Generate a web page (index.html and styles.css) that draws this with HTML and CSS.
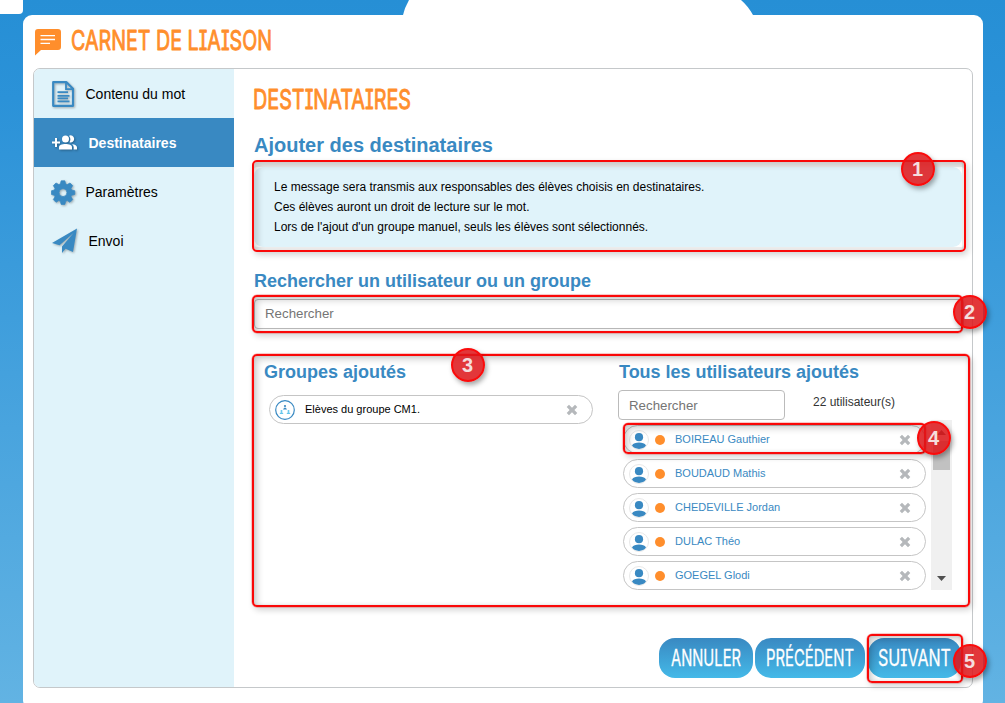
FILE: index.html
```html
<!DOCTYPE html>
<html lang="fr">
<head>
<meta charset="utf-8">
<title>Carnet de liaison</title>
<link rel="stylesheet" href="styles.css">
</head>
<body>
<svg class="defs" aria-hidden="true">
  <symbol id="cross" viewBox="0 0 12 12"><path d="M3 0.8 6 3.7 9 0.8 11.3 3 8.4 6 11.3 9 9 11.2 6 8.3 3 11.2 0.7 9 3.6 6 0.7 3z"/></symbol>
  <symbol id="user" viewBox="0 0 20 20"><circle cx="10" cy="10" r="9.5" fill="#fff" stroke="#e8e8e8"/><circle cx="10" cy="7.2" r="4.1"/><path d="M3 15.600C4 13.400 7 12.600 10 12.600s6 .8 7 3C15.500 18 13 18.900 10 18.900S4.500 18 3 15.600z"/></symbol>
</svg>
<svg class="backdrop" viewBox="0 0 1005 15" aria-hidden="true">
  <path d="M0 0H23V10Q23 14 19 14H0z"/><path d="M409 0Q404.500 8 403 15H753Q748 6 741 0z"/>
</svg>
<div class="panel">
  <header class="head">
    <svg class="head-icon" viewBox="0 0 26 27"><path fill="#ff8e2c" d="M3 0H23Q26 0 26 3V18Q26 21 23 21H6L0 26.500V3Q0 0 3 0z"/><path stroke="#fff" stroke-width="1.300" d="M5.500 6.700H20M5.500 10.500H20M5.500 14.300H15"/></svg>
    <svg class="script" width="202" height="26"><text x="-1" y="21.500" textLength="201" lengthAdjust="spacingAndGlyphs">CARNET DE LIAISON</text></svg>
  </header>
  <div class="box">
    <nav class="side">
      <a class="item"><svg class="ico" viewBox="0 0 26 28"><path fill="none" stroke="#3989c2" stroke-width="2.200" stroke-linejoin="round" d="M3.200 2.200H16.500L23 8.700V25.800H3.200z"/><path fill="none" stroke="#3989c2" stroke-width="1.800" d="M16 2.500V9.200H22.800M7.500 12.200H18M7.500 15.800H19.500M7.500 18.300H18M7.500 21.300H19.500"/></svg><span>Contenu du mot</span></a>
      <a class="item active"><svg class="ico wide" viewBox="0 0 26 28"><g fill="#fff"><path d="M4 9h2v3.500h3v2H6V18H4v-3.500H1v-2h3z"/><circle cx="14.500" cy="10" r="3.500"/><path d="M8 20.500V18.500C8 15.800 11 15 14.500 15S21 15.800 21 18.500V20.500z"/><path d="M18 6.800a3.500 3.500 0 1 1 .5 6.400Q20.500 10 18 6.800zM21 15.200C24 15.500 26 16.500 26 18.500V20.500H22.700V18Q22.600 16.200 21 15.200z"/></g></svg><span>Destinataires</span></a>
      <a class="item"><svg class="ico" viewBox="0 0 26 28"><path fill="#3989c2" stroke="#3989c2" stroke-linejoin="round" stroke-width=".8" fill-rule="evenodd" transform="translate(1.500 1) scale(.92)" d="M10.500 2h4l.9 3.400 1.700.7 3-1.800 2.900 2.900-1.800 3 .7 1.700 3.400.9v4l-3.400.9-.7 1.700 1.800 3-2.900 2.900-3-1.800-1.700.7-.9 3.400h-4l-.9-3.400-1.700-.7-3 1.800L2 22.400l1.800-3-.7-1.700L0 16.800v-4l3.100-.9.7-1.700L2 7.200l2.900-2.900 3 1.800 1.700-.7zM12.500 10.500a4.300 4.300 0 1 0 0 8.600 4.300 4.300 0 0 0 0-8.600z"/></svg><span>Paramètres</span></a>
      <a class="item"><svg class="ico wide" viewBox="0 0 26 28"><path fill="#3989c2" d="M26 1.500 22 25 14.500 21.800 11 26V19.500L22.500 6 8.500 18.200 1 16z"/></svg><span>Envoi</span></a>
    </nav>
    <main class="main">
      <svg class="script title" width="158" height="26"><text x="-1" y="21.500" textLength="158" lengthAdjust="spacingAndGlyphs">DESTINATAIRES</text></svg>
      <h2 class="h-add">Ajouter des destinataires</h2>
      <div class="info">
        <p>Le message sera transmis aux responsables des élèves choisis en destinataires.</p>
        <p>Ces élèves auront un droit de lecture sur le mot.</p>
        <p>Lors de l'ajout d'un groupe manuel, seuls les élèves sont sélectionnés.</p>
      </div>
      <h3 class="h-search">Rechercher un utilisateur ou un groupe</h3>
      <div class="field wide-field">Rechercher</div>
      <div class="cols">
        <section class="groups">
          <h3>Groupes ajoutés</h3>
          <div class="pill group"><svg class="gicon" viewBox="0 0 20 20"><circle cx="10" cy="10" r="9.300" fill="#fff" stroke="#3989c2" stroke-width="1.200"/><g fill="#3989c2"><circle cx="10" cy="6" r="1.100"/><path d="M8 9.500q2-4 4 0z"/></g><g fill="#62c5ec"><circle cx="6.500" cy="11" r="1"/><path d="M4.500 14q2-4 4 0z"/><circle cx="13.500" cy="11" r="1"/><path d="M11.500 14q2-4 4 0z"/></g></svg><span>Elèves du groupe CM1.</span><svg class="x"><use href="#cross"/></svg></div>
        </section>
        <section class="users">
          <h3>Tous les utilisateurs ajoutés</h3>
          <div class="filter"><div class="field small">Rechercher</div><span>22 utilisateur(s)</span></div>
          <div class="scroller">
            <div class="list">
              <div class="pill"><svg class="avatar"><use href="#user"/></svg><i class="dot"></i><span>BOIREAU Gauthier</span><svg class="x"><use href="#cross"/></svg></div>
              <div class="pill"><svg class="avatar"><use href="#user"/></svg><i class="dot"></i><span>BOUDAUD Mathis</span><svg class="x"><use href="#cross"/></svg></div>
              <div class="pill"><svg class="avatar"><use href="#user"/></svg><i class="dot"></i><span>CHEDEVILLE Jordan</span><svg class="x"><use href="#cross"/></svg></div>
              <div class="pill"><svg class="avatar"><use href="#user"/></svg><i class="dot"></i><span>DULAC Théo</span><svg class="x"><use href="#cross"/></svg></div>
              <div class="pill"><svg class="avatar"><use href="#user"/></svg><i class="dot"></i><span>GOEGEL Glodi</span><svg class="x"><use href="#cross"/></svg></div>
            </div>
            <div class="bar"><svg viewBox="0 0 9 5"><path d="M0 5 4.500 0 9 5z"/></svg><div class="thumb"></div><svg class="down" viewBox="0 0 9 5"><path d="M0 0H9L4.500 5z"/></svg></div>
          </div>
        </section>
      </div>
      <div class="actions">
        <div class="btn b1"><svg class="script" width="70" height="24"><text x="0" y="20" textLength="70" lengthAdjust="spacingAndGlyphs">ANNULER</text></svg></div>
        <div class="btn b2"><svg class="script" width="89" height="24"><text x="0" y="20" textLength="88" lengthAdjust="spacingAndGlyphs">PRÉCÉDENT</text></svg></div>
        <div class="btn b3"><svg class="script" width="73" height="24"><text x="0" y="20" textLength="73" lengthAdjust="spacingAndGlyphs">SUIVANT</text></svg></div>
      </div>
    </main>
  </div>
</div>
<div class="mark m1"></div><div class="mark m2"></div><div class="mark m3"></div><div class="mark m4"></div><div class="mark m5"></div>
<div class="num n1">1</div><div class="num n2">2</div><div class="num n3">3</div><div class="num n4">4</div><div class="num n5">5</div>
</body>
</html>
```
FILE: styles.css
```css
* { box-sizing: border-box; }
body { margin: 0; width: 1005px; height: 703px; overflow: hidden; position: relative; font-family: "Liberation Sans", Arial, sans-serif; color: #000; background: linear-gradient(#268fd5, #2b92d8 14%, #62b3e3); }
h2, h3, p { margin: 0; }
svg { display: block; flex: none; }
.defs { position: absolute; width: 0; height: 0; }
.backdrop { width: 1005px; height: 15px; fill: #fff; }
.panel { margin-left: 23px; width: 960px; height: 694px; padding: 13px 10px; border-radius: 9px; background: #fff; }
.head { display: flex; height: 40px; gap: 11px; }
.head-icon { width: 26px; height: 27px; margin: 1px 0 0 2px; }
.script { overflow: visible; font-family: Inter, sans-serif; font-feature-settings: "cv08" 1; fill: #ff8e2c; font-size: 26.500px; font-weight: 400; stroke: #ff8e2c; stroke-width: .9px; stroke-linejoin: round; }
.box { display: flex; width: 940px; height: 620px; border: 1px solid #c5c8ca; border-radius: 7px; overflow: hidden; }
.side { width: 200px; background: #e0f3fa; }
.item { display: flex; align-items: center; height: 49px; padding-left: 16px; gap: 9.500px; font-size: 14px; }
.active { background: #3989c2; color: #fff; font-weight: 700; }
.ico { width: 26px; height: 28px; filter: drop-shadow(1px 1px 1px rgba(0, 0, 0, .3)); }
.wide { margin: 0 2px 0 1px; }
.main { width: 738px; padding: 18px 0 0 20px; }
h2, h3 { color: #3989c2; font-weight: 700; }
.h-add { margin-top: 20px; height: 34px; font-size: 20px; line-height: 24px; }
.info { width: 708px; height: 80px; border-radius: 9px; background: #e0f3fa; padding: 10px 20px; font-size: 12px; line-height: 20px; }
h3 { font-size: 18px; line-height: 22px; }
.h-search { margin-top: 23px; height: 29px; }
.field { display: flex; align-items: center; width: 710px; height: 30px; padding-left: 10px; border: 1px solid #bbb; border-radius: 4px; background: #fff; color: #757575; font-size: 13.300px; }
.wide-field { padding-bottom: 2px; }
.cols { display: flex; margin-top: 32px; height: 249px; }
.groups { width: 364px; padding-left: 10px; }
.pill { display: flex; align-items: center; width: 303px; height: 29px; border: 1px solid #c5c5c5; border-radius: 15px; padding: 0 14px 0 5px; background: #fff; color: #3989c2; font-size: 11px; }
.pill span { padding-bottom: 2px; }
.group { margin: 12px 0 0 5px; width: 324px; color: #000; }
.group span { padding-bottom: 1px; }
.gicon { width: 20px; height: 20px; margin-right: 10px; }
.x { width: 12px; height: 12px; margin-left: auto; fill: #b5b8bb; }
.users { width: 340px; }
.users h3 { padding-left: 1px; letter-spacing: -.03px; }
.filter { display: flex; height: 35px; gap: 28px; margin-top: 7px; font-size: 12px; color: #333; }
.small { width: 167px; }
.filter span { line-height: 24px; }
.scroller { display: flex; width: 334px; height: 165px; justify-content: space-between; padding-left: 5px; }
.list { display: flex; flex-direction: column; gap: 5px; }
.avatar { width: 20px; height: 20px; margin-top: 1px; fill: #3989c2; }
.dot { width: 10px; height: 10px; margin: 1px 10px 0 6px; border-radius: 50%; background: #ff8e2c; }
.bar { display: flex; flex-direction: column; align-items: center; width: 21px; height: 170px; margin-top: -5px; padding-top: 10px; background: #f0f0f0; }
.bar svg { width: 9px; height: 5px; fill: #505050; }
.thumb { width: 17px; height: 29px; margin-top: 6px; background: #c1c1c1; }
.bar .down { margin: auto 0 9px; }
.actions { display: flex; margin: 28px 0 0 405px; }
.btn { display: flex; align-items: center; justify-content: center; height: 40px; border-radius: 16px; background: linear-gradient(#3989c2, #44b9e8); }
.btn .script { font-size: 22.500px; fill: #fff; stroke: #fff; stroke-width: .3px; }
.b1 { width: 94px; margin-right: 2px; }
.b2 { width: 110px; margin-right: 3px; }
.b3 { width: 93px; }
.mark { position: absolute; border: 2px solid #fa0808; border-radius: 5px; box-shadow: inset 3px 3px 7px rgba(0, 0, 0, .2), inset 0 0 3px rgba(0, 0, 0, .1), 2px 3px 6px rgba(0, 0, 0, .18), 0 0 0 .5px rgba(255, 0, 0, .4); }
.m1 { left: 252px; top: 160px; width: 714px; height: 92px; box-shadow: inset 0 5px 0 rgba(0, 0, 0, .08), inset 0 -3px 0 rgba(0, 0, 0, .07), inset -2px 0 0 rgba(0, 0, 0, .07), inset 4px 3px 6px rgba(0, 0, 0, .16), 2px 3px 6px rgba(0, 0, 0, .18); }
.m2 { left: 252px; top: 295px; width: 711px; height: 38px; }
.m3 { left: 252px; top: 354px; width: 718px; height: 253px; }
.m4 { left: 623px; top: 423px; width: 303px; height: 31px; }
.m5 { left: 867px; top: 634px; width: 96px; height: 49px; }
.num { position: absolute; width: 34px; height: 34px; border: 2px solid #fa0b0b; border-radius: 50%; background: rgba(221, 22, 26, .86); box-shadow: 2px 3px 5px rgba(0, 0, 0, .35); color: #f5dede; font-size: 20px; font-weight: 700; line-height: 30px; text-align: center; padding-right: 1px; }
.n1 { left: 901px; top: 152px; }
.n2 { left: 953px; top: 295px; }
.n3 { left: 451px; top: 348px; }
.n4 { left: 917px; top: 421px; }
.n5 { left: 953px; top: 644px; }
```
